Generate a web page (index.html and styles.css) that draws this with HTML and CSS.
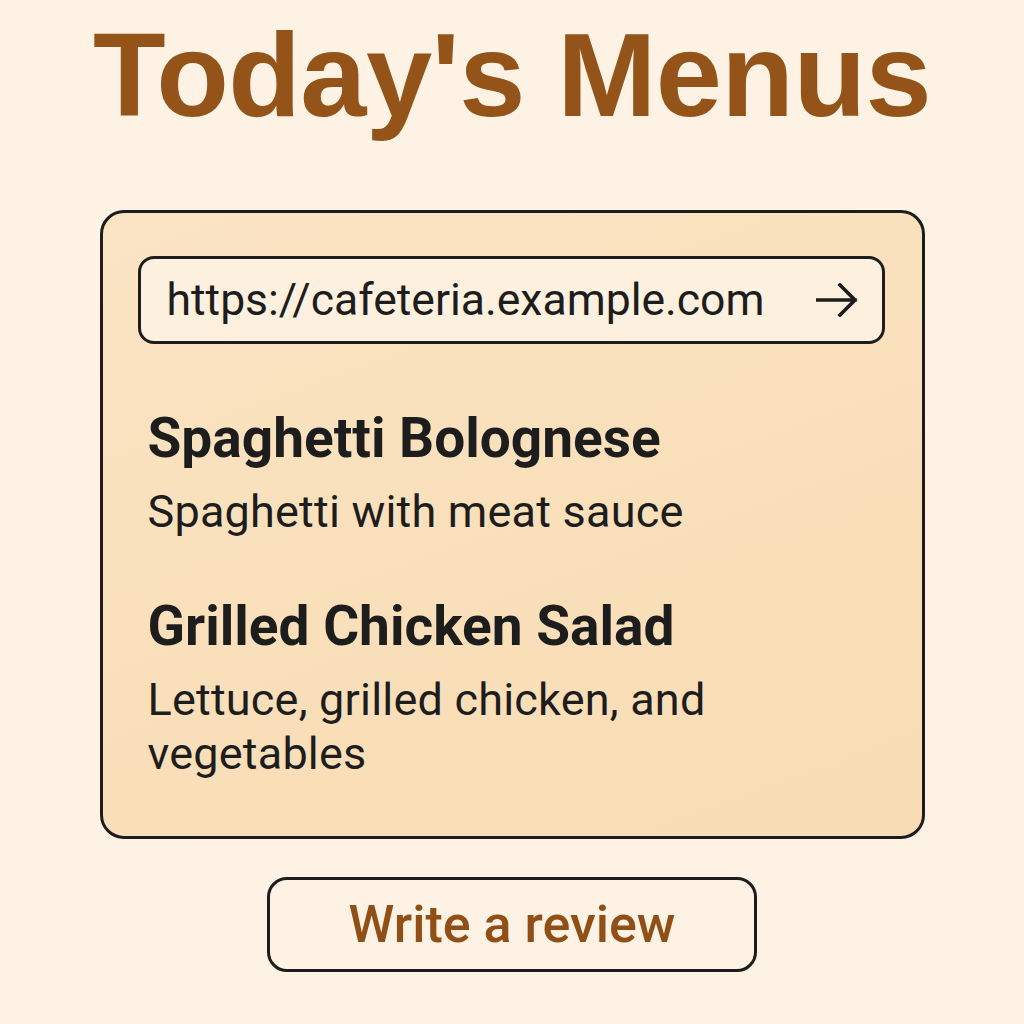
FILE: index.html
```html
<!DOCTYPE html>
<html lang="en">
<head>
<meta charset="utf-8">
<title>Today's Menus</title>
<link rel="stylesheet" href="styles.css">
</head>
<body>
<main class="page">
  <h1 class="title">Today's Menus</h1>
  <section class="card">
    <div class="urlbar">
      <span class="url">https://cafeteria.example.com</span>
      <svg class="arrow" width="42" height="34" viewBox="0 0 42 34" aria-hidden="true">
        <path d="M1 17 H39 M24 2 L39 17 L24 32" fill="none" stroke="#1c1c1c" stroke-width="3.6" stroke-linecap="square" stroke-linejoin="miter"/>
      </svg>
    </div>
    <div class="menu">
      <div class="item">
        <h2 class="dish">Spaghetti Bolognese</h2>
        <p class="desc">Spaghetti with meat sauce</p>
      </div>
      <div class="item">
        <h2 class="dish">Grilled Chicken Salad</h2>
        <p class="desc">Lettuce, grilled chicken, and vegetables</p>
      </div>
    </div>
  </section>
  <button class="review" type="button">Write a review</button>
</main>
</body>
</html>
```
FILE: styles.css
```css
html, body {
  margin: 0;
  padding: 0;
}
body {
  background: #fdf2e3;
  font-family: Roboto, "Noto Sans", sans-serif;
  color: #1d1d1d;
}
.page {
  display: flex;
  flex-direction: column;
  align-items: center;
  padding-top: 15px;
  min-height: 1024px;
  box-sizing: border-box;
}
.title {
  margin: 0;
  font-family: "Liberation Sans", Arial, sans-serif;
  font-weight: 700;
  font-size: 119px;
  line-height: 119px;
  color: #945419;
  letter-spacing: -0.6px;
}
.card {
  margin-top: 76px;
  width: 825px;
  box-sizing: border-box;
  border: 3px solid #1d1d1d;
  border-radius: 24px;
  background: linear-gradient(160deg, #fbe4c4 0%, #f9dfb9 60%, #f9ddb6 100%);
  padding: 43px 37px 55px 35px;
}
.urlbar {
  height: 88px;
  box-sizing: border-box;
  border: 3px solid #1d1d1d;
  border-radius: 16px;
  background: #fdf0de;
  display: flex;
  align-items: center;
  justify-content: space-between;
  padding: 0 24px 0 26px;
}
.url {
  font-size: 44.5px;
  color: #1d1d1d;
}
.arrow {
  display: block;
}
.menu {
  padding: 0 10px;
  margin-top: 64px;
  display: flex;
  flex-direction: column;
  gap: 57px;
}
.dish {
  margin: 0;
  font-size: 55px;
  line-height: 60px;
  font-weight: 700;
  color: #1d1d1d;
}
.desc {
  margin: 17px 0 0;
  font-size: 45px;
  line-height: 54px;
  color: #1d1d1d;
  max-width: 720px;
  letter-spacing: 0.2px;
}
.review {
  margin-top: 38px;
  width: 490px;
  height: 95px;
  border: 3px solid #1d1d1d;
  border-radius: 20px;
  background: #fdf2e3;
  font-family: Roboto, "Noto Sans", sans-serif;
  font-size: 52px;
  font-weight: 500;
  color: #8f4f16;
  padding: 0;
}
```
